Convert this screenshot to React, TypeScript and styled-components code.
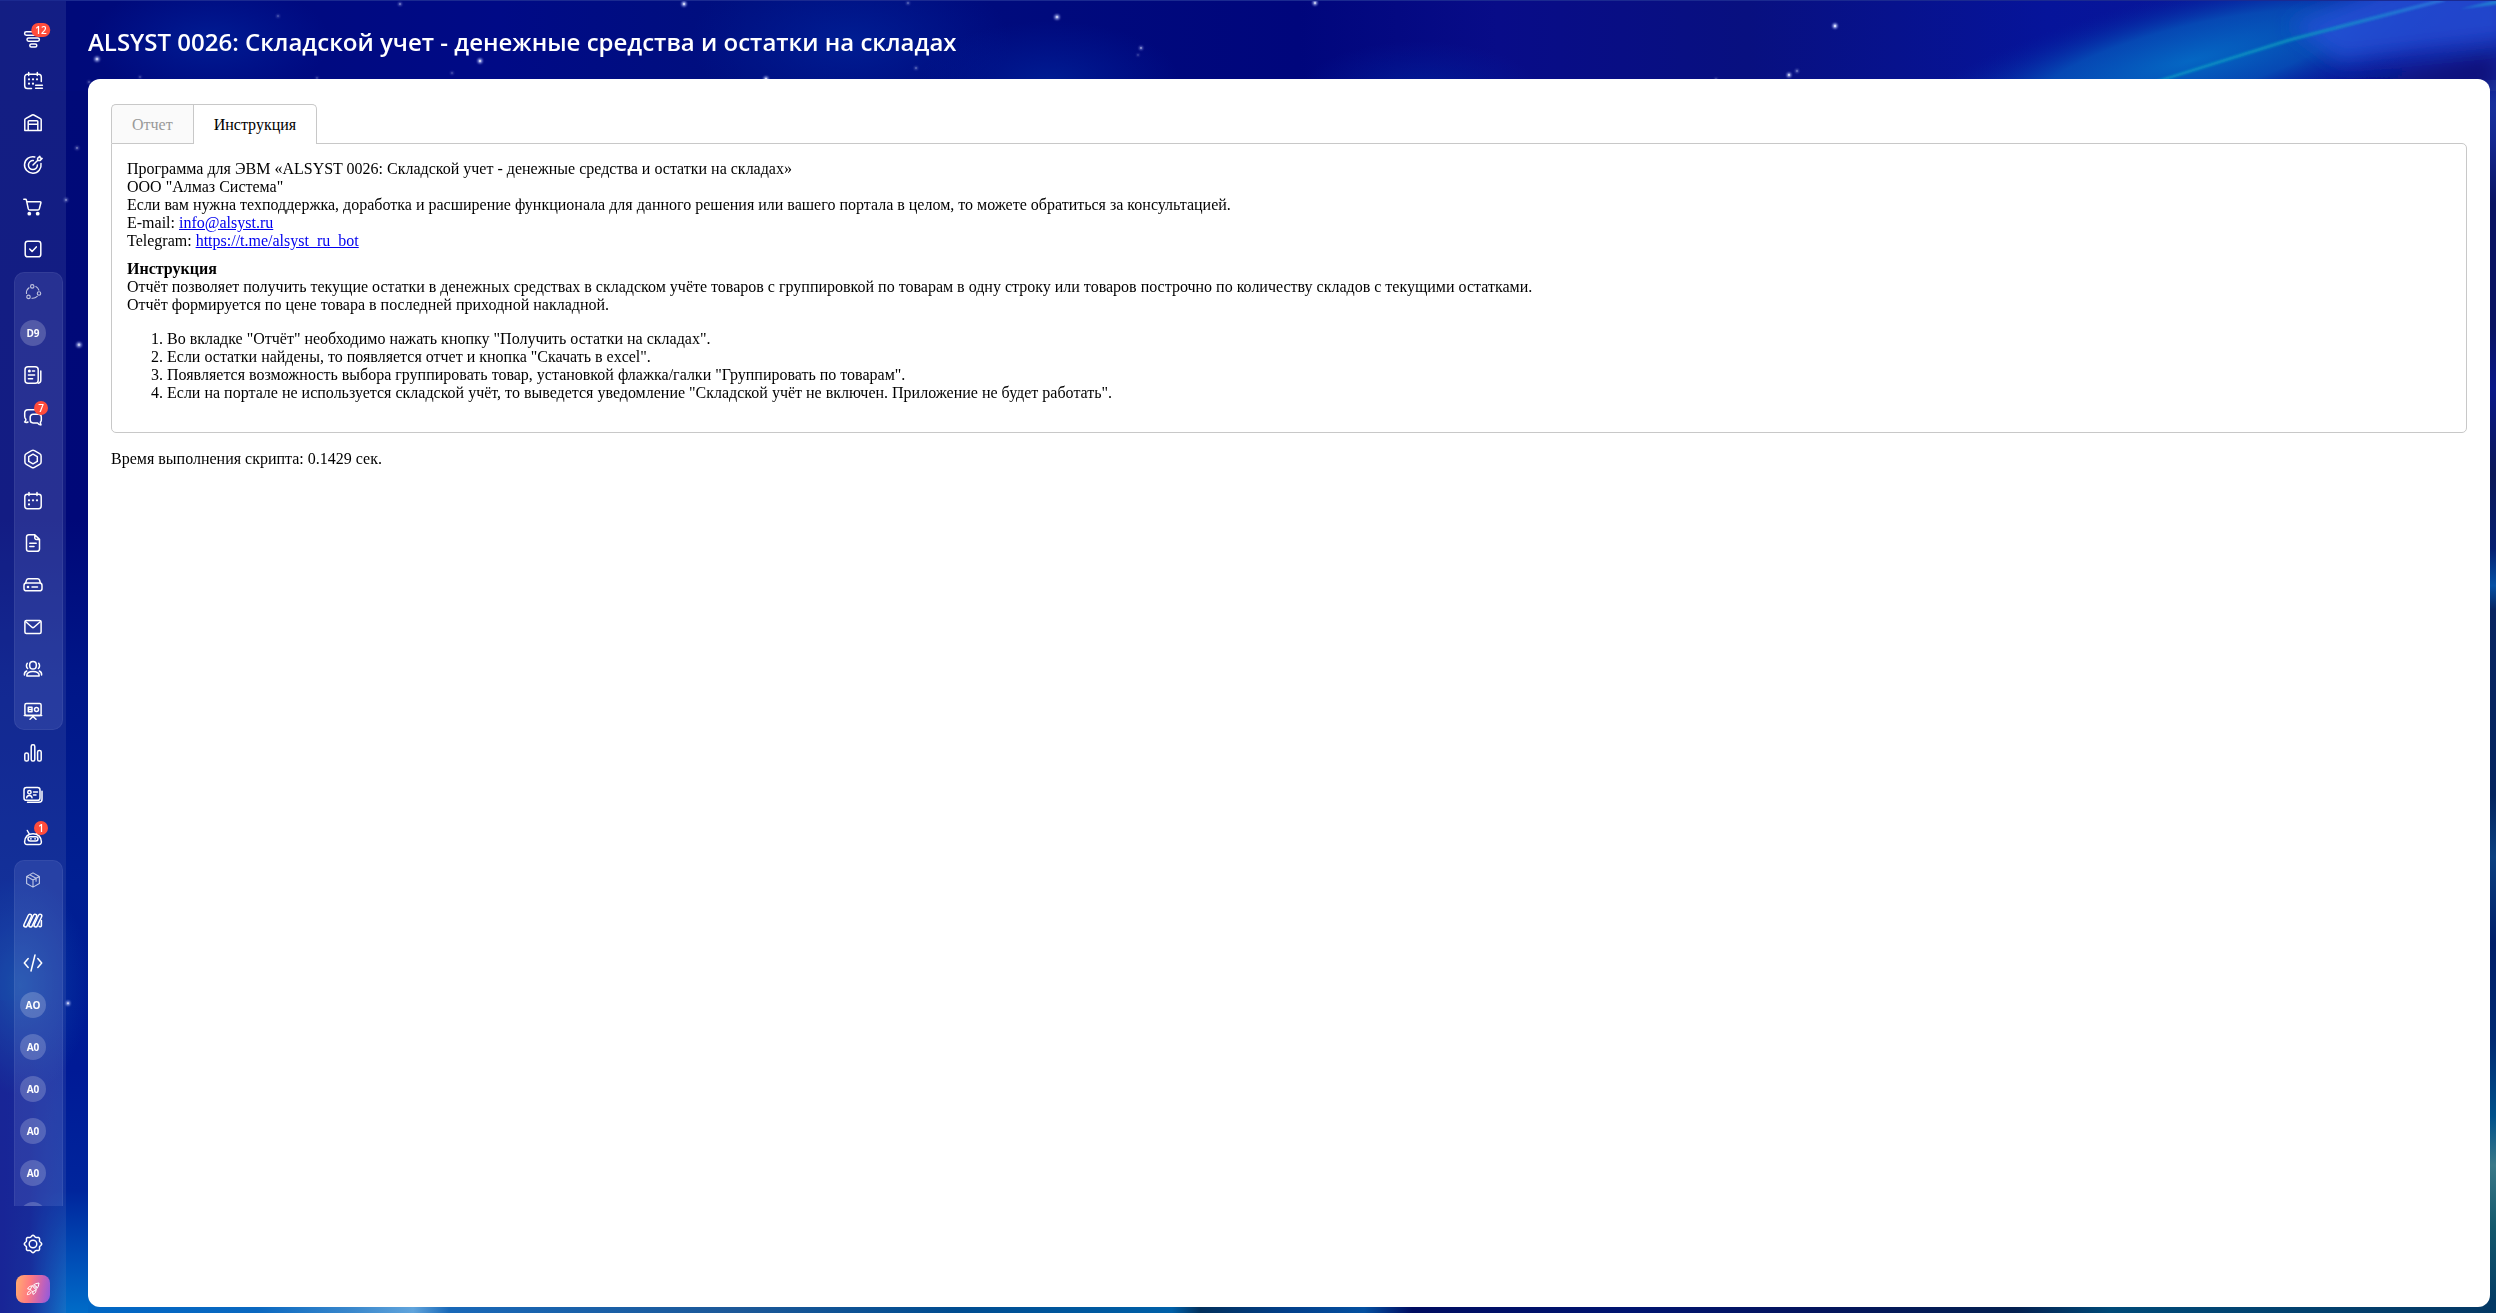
import React from "react";
import styled, { createGlobalStyle } from "styled-components";

const GlobalStyle = createGlobalStyle`
  *, *::before, *::after { box-sizing: border-box; }
  html, body { margin: 0; padding: 0; background: #000a80; }
  body { font-family: "Liberation Serif", "Times New Roman", serif; font-size: 16px; line-height: 18px; color: #000; }
`;

const Shell = styled.div`
  position: relative;
  isolation: isolate;
  display: flex;
  height: 100vh;
  overflow: hidden;
  border-top: 1px solid #1b2a90;
`;

const Backdrop = styled.svg`
  position: absolute;
  inset: 0;
  z-index: -1;
  width: 100%;
  height: 100%;
`;

const Sidebar = styled.nav`
  flex: none;
  display: flex;
  flex-direction: column;
  width: 66px;
  background: rgba(120, 135, 190, 0.16);
`;

const MenuScroll = styled.div`
  flex: 1;
  min-height: 0;
  overflow: hidden;
  padding-top: 17px;
`;

const MenuFooter = styled.div`
  flex: none;
  display: flex;
  flex-direction: column;
  align-items: center;
  gap: 18px;
  height: 107px;
  padding-top: 25px;
`;

const List = styled.ul`
  list-style: none;
  margin: 0;
  padding: 0;
`;

const Group = styled.div`
  display: flow-root;
  margin: 2px 3px 2px 14px;
  border-radius: 10px;
  background: rgba(190, 200, 255, 0.12);
  box-shadow: inset 0 0 0 1px rgba(255, 255, 255, 0.06);

  ul { margin: -2px 8px -2px -14px; padding: 2px 0; }
  li:first-child { height: 40px; }
  li:last-child { height: 40px; padding-top: 2px; }
`;

const Item = styled.li`
  display: flex;
  width: 66px;
  height: 42px;
  align-items: center;
  justify-content: center;
`;

const MenuButton = styled.button<{ $dim?: boolean }>`
  position: relative;
  display: flex;
  align-items: center;
  justify-content: center;
  width: 26px;
  height: 26px;
  padding: 0;
  border: 0;
  background: none;
  color: #fff;
  opacity: ${(p) => (p.$dim ? 0.7 : 1)};
  cursor: pointer;
`;

const Avatar = styled.span`
  width: 26px;
  height: 26px;
  border-radius: 50%;
  background: rgba(255, 255, 255, 0.2);
  font: 700 10px/26px "Open Sans", sans-serif;
  text-align: center;
`;

const Badge = styled.span`
  position: absolute;
  top: -3px;
  left: 21px;
  min-width: 14px;
  height: 14px;
  padding: 0 4px;
  border-radius: 7px;
  transform: translateX(-50%);
  background: #ff4c3b;
  font: 600 10px/14px "Open Sans", sans-serif;
`;

const Glyph = styled.svg<{ $size?: number }>`
  display: block;
  flex: none;
  width: ${(p) => p.$size ?? 24}px;
  height: ${(p) => p.$size ?? 24}px;
  fill: none;
  stroke: currentColor;
  stroke-width: 1.5;
  stroke-linecap: round;
  stroke-linejoin: round;
`;

const RocketButton = styled.button`
  display: flex;
  align-items: center;
  justify-content: center;
  width: 34px;
  height: 28px;
  padding: 0;
  border: 0;
  border-radius: 8px;
  background: linear-gradient(100deg, #ffb070 0%, #ff7a80 40%, #c462b8 72%, #8b5be0 100%);
  color: #fff;
  cursor: pointer;
`;

const Main = styled.main`
  flex: 1;
  min-width: 0;
  display: flex;
  flex-direction: column;
  padding: 0 6px 6px 22px;
`;

const Title = styled.h1`
  flex: none;
  margin: 0;
  height: 78px;
  font: 600 24px/82px "Open Sans", sans-serif;
  color: #fff;
  white-space: nowrap;
`;

const Page = styled.section`
  flex: 1;
  padding: 25px 23px;
  border-radius: 12px;
  background: #fff;
`;

const Tabs = styled.div`
  display: flex;
`;

const Tab = styled.button<{ $active?: boolean }>`
  height: ${(p) => (p.$active ? 40 : 39)}px;
  margin-bottom: ${(p) => (p.$active ? -1 : 0)}px;
  padding: 0 20px;
  border: 1px solid #c8c8c8;
  border-bottom: 0;
  border-right-width: ${(p) => (p.$active ? 1 : 0)}px;
  border-radius: ${(p) => (p.$active ? "0 5px 0 0" : "5px 0 0 0")};
  position: relative;
  background: ${(p) => (p.$active ? "#fff" : "#fafafa")};
  color: ${(p) => (p.$active ? "#000" : "#999")};
  font: inherit;
  line-height: 40px;
  cursor: pointer;
`;

const TabPanel = styled.div`
  padding: 16px 15px 30px;
  border: 1px solid #c8c8c8;
  border-radius: 0 5px 5px 5px;
`;

const Paragraph = styled.p`
  margin: 0 0 10px;
`;

const Steps = styled.ol`
  margin: 16px 0 0;
  padding-left: 40px;
`;

const Link = styled.a`
  color: #0000ee;
`;

const Timing = styled.p`
  margin: 17px 0 0;
`;

const dot = (x: number, y: number, r = 1.1) => (
  <circle key={`${x}-${y}`} cx={x} cy={y} r={r} fill="currentColor" stroke="none" />
);

const gearOutline =
  Array.from({ length: 96 }, (_, i) => {
    const a = (i / 96) * Math.PI * 2;
    const r = 7.9 + 0.75 * Math.cos(a * 8);
    return `${i ? "L" : "M"}${(12 + r * Math.cos(a)).toFixed(2)} ${(12 + r * Math.sin(a)).toFixed(2)}`;
  }).join("") + "z";

const icons: Record<string, React.ReactNode> = {
  funnel: (
    <>
      <rect x="3.6" y="4.8" width="16.8" height="3.4" rx="1.7" />
      <rect x="6" y="11" width="12.4" height="3.2" rx="1.6" />
      <rect x="8.8" y="17.1" width="7" height="3" rx="1.5" />
    </>
  ),
  planner: (
    <>
      <path d="M10.5 19.5H6.5a2.8 2.8 0 0 1-2.8-2.8V8a2.8 2.8 0 0 1 2.8-2.8h11A2.8 2.8 0 0 1 20.3 8v4.5" />
      <path d="M7.7 3.6v3M16.3 3.6v3M14.6 16.2h6.8M14.6 19.3h6.8" />
      {[dot(12, 10.3), dot(16, 10.3), dot(8, 10.3), dot(8, 14.7), dot(12, 14.7)]}
    </>
  ),
  warehouse: (
    <>
      <path d="M3.8 19.4V8.8c0-.6.3-1 .8-1.2L11.2 4a1.7 1.7 0 0 1 1.6 0l6.6 3.6c.5.2.8.6.8 1.2v10.6z" />
      <path d="M7.2 19.2V10.6c0-.5.3-.8.8-.8h8c.5 0 .8.3.8.8v8.6M7.4 13.3h9.2" />
    </>
  ),
  target: (
    <>
      <path d="M13.8 3.9A8.3 8.3 0 1 0 20 10.6" />
      <path d="M12.3 7.6a4.5 4.5 0 1 0 4.1 4.3M12 12l4.8-4.8M16.6 7.3V5.4l2.2-2.1.5 1.7 1.8.5-2.2 2.1z" />
    </>
  ),
  cart: (
    <>
      <path d="M2.8 4.3h1.6c.5 0 .9.3 1 .8l1.9 8.8c.2.7.7 1.1 1.4 1.1h8.2c.7 0 1.2-.4 1.4-1.1l1.6-6.1c.1-.6-.2-1-.8-1H6.2" />
      {[dot(8.3, 18.7, 1.9), dot(16.7, 18.7, 1.9)]}
    </>
  ),
  tasks: (
    <>
      <rect x="4.2" y="4.2" width="15.6" height="15.6" rx="2.6" />
      <path d="M8.7 12l2.4 2.4 4.2-4.5" />
    </>
  ),
  cycle: (
    <>
      <circle cx="11" cy="4.5" r="2.3" />
      <circle cx="20" cy="14" r="2.3" />
      <circle cx="6" cy="18.5" r="2.3" />
      <path d="M6.7 6.3A8.5 8.5 0 0 0 3.3 14M15.8 4.7A8.5 8.5 0 0 1 19.8 9.5M10.6 20.3a8.5 8.5 0 0 0 7-2.4" />
    </>
  ),
  feed: (
    <>
      <rect x="4" y="3.7" width="13.2" height="16.6" rx="3" />
      <path d="M19.8 8v9.2a3 3 0 0 1-2.6 3M7.4 12h6.2M7.4 15.7h4.2M11.4 8h2.2" />
      {dot(8.4, 8, 1.5)}
    </>
  ),
  chats: (
    <>
      <path d="M7 17c-1.2.6-2.6.6-3.4 0 1-.8 1.4-1.7 1.3-2.7A3.5 3.5 0 0 1 3.7 11.6V8A3.3 3.3 0 0 1 7 4.7h7.5A3.3 3.3 0 0 1 17.6 7" />
      <path d="M12 9.3h5.5a2.8 2.8 0 0 1 2.8 2.8v3c0 1-.4 1.7-.9 2.1 0 1.1.2 1.9.6 2.7-1.5 0-2.8-.8-3.5-2H12a2.8 2.8 0 0 1-2.8-2.8v-3A2.8 2.8 0 0 1 12 9.3z" />
    </>
  ),
  hexagon: (
    <>
      <path d="M10.6 3.7a2.8 2.8 0 0 1 2.8 0l5.2 2.9a2.8 2.8 0 0 1 1.5 2.5v5.8a2.8 2.8 0 0 1-1.5 2.5l-5.2 2.9a2.8 2.8 0 0 1-2.8 0l-5.2-2.9a2.8 2.8 0 0 1-1.5-2.5V9.1a2.8 2.8 0 0 1 1.5-2.5z" />
      <path d="M12 7.2l4.3 2.4v4.8L12 16.8l-4.3-2.4V9.6z" />
    </>
  ),
  calendar: (
    <>
      <rect x="3.8" y="5.2" width="16.4" height="14.5" rx="2.6" />
      <path d="M8 3.6v3M16 3.6v3" />
      {[dot(8, 11.3), dot(12, 11.3), dot(16, 11.3), dot(8, 15.4)]}
    </>
  ),
  doc: (
    <path d="M13.8 3.7H7.8A2.3 2.3 0 0 0 5.5 6v12a2.3 2.3 0 0 0 2.3 2.3h8.4a2.3 2.3 0 0 0 2.3-2.3V8.4zM13.8 3.9v3a1.5 1.5 0 0 0 1.5 1.5h3M8.8 12.3h6.4M8.8 15.5h4.2" />
  ),
  disk: (
    <>
      <path d="M4.5 10.3l1-3.2c.3-.9 1-1.4 1.9-1.4h9.2c.9 0 1.6.5 1.9 1.4l1 3.2" />
      <rect x="3" y="10" width="18" height="7.8" rx="2.4" />
      <path d="M11 14h5.5" />
      {dot(7, 14, 1.3)}
    </>
  ),
  mail: (
    <>
      <rect x="3.9" y="5.6" width="16.2" height="12.8" rx="1.5" />
      <path d="M4.5 6.5l6.5 5.7a1.5 1.5 0 0 0 2 0l6.5-5.7" />
    </>
  ),
  people: (
    <>
      <rect x="8.7" y="4.4" width="6.6" height="7.6" rx="3.3" />
      <path d="M5.8 19c-.4-3 2.3-4.6 6.2-4.6s6.6 1.6 6.2 4.6zM6.3 6.3c-1.2 1.3-1.2 3.9.3 5.2M17.7 6.3c1.2 1.3 1.2 3.9-.3 5.2M5.7 14c-1.7.7-2.5 2-2.3 4M18.3 14c1.7.7 2.5 2 2.3 4" />
    </>
  ),
  board: (
    <>
      <rect x="3.9" y="4.4" width="16.2" height="12" rx="1.5" />
      <path d="M3.3 16.4h17.4M12 16.5v1l-3 2.8M12 17.5l3 2.8M7.3 8.2h3.7v4.6H7.3zM7.3 10.5h3.5" />
      <circle cx="15.5" cy="10.5" r="2" />
    </>
  ),
  bars: (
    <>
      <rect x="3.8" y="12" width="3.6" height="8" rx="1.6" />
      <rect x="10.2" y="3.8" width="3.6" height="16.2" rx="1.6" />
      <rect x="16.6" y="9.5" width="3.6" height="10.5" rx="1.6" />
    </>
  ),
  card: (
    <>
      <rect x="3" y="4.5" width="16" height="12.8" rx="2.4" />
      <path d="M21 8.2v8a3 3 0 0 1-3 3H6.5M12.5 9h4M12.5 12h2.5M5.7 14.8c.2-3.2 5-3.2 5.3 0" />
      <circle cx="8.4" cy="9.3" r="1.7" />
    </>
  ),
  robot: (
    <>
      <path d="M6 19.5h12a2.4 2.4 0 0 0 2.4-2.6C20 11.5 17 8.7 12 8.7S4 11.5 3.6 16.9A2.4 2.4 0 0 0 6 19.5zM8.3 9L6.3 5.5M15.7 9l1.5-2.5" />
      <rect x="7" y="11.7" width="10" height="4.2" rx="2.1" />
      {[dot(9.9, 13.8, 0.9), dot(14.1, 13.8, 0.9)]}
    </>
  ),
  box: (
    <path d="M12 2.5l8.5 4.7v9.6L12 21.5l-8.5-4.7V7.2zM3.7 7.3L12 12l8.3-4.7M12 12v9.3M7.5 5l8.6 4.8v3.8" />
  ),
  automation: (
    <>
      <rect x="5" y="4.8" width="3.4" height="13.6" rx="1.7" transform="rotate(25 6.7 11.6)" />
      <rect x="10.1" y="4.8" width="3.4" height="13.6" rx="1.7" transform="rotate(25 11.8 11.6)" />
      <rect x="15.2" y="4.8" width="3.4" height="13.6" rx="1.7" transform="rotate(25 16.9 11.600)" />
      <path d="M20.400 11.500v5.200a1.300 1.300 0 0 1-2.400.5" />
    </>
  ),
  code: <path d="M7.2 7.5L3.3 12l3.9 4.5M16.8 7.5l3.9 4.5-3.9 4.5M14 4l-4 16" />,
  gear: (
    <>
      <path d={gearOutline} />
      <circle cx="12" cy="12" r="3.8" />
    </>
  ),
  rocket: (
    <>
      <path d="M8 12.5c2-5.5 6-9 13-9.5-.5 7-4 11-9.5 13zM8 12.5l-4-.5c1-3.2 3.5-5 7-4.5M11.5 16l.5 4c3.2-1 5-3.5 4.5-7M7 15c-2 .5-3.5 2.5-3.5 5.5 3 0 5-1.5 5.5-3.5" />
      <circle cx="15" cy="9" r="2" />
    </>
  ),
};

type Entry = { icon?: string; text?: string; label: string; badge?: string; dim?: boolean };

const topItems: Entry[] = [
  { icon: "funnel", label: "CRM", badge: "12" },
  { icon: "planner", label: "Бронирование" },
  { icon: "warehouse", label: "Склад" },
  { icon: "target", label: "Маркетинг" },
  { icon: "cart", label: "Магазины" },
  { icon: "tasks", label: "Задачи" },
];

const teamItems: Entry[] = [
  { icon: "cycle", label: "Совместная работа", dim: true },
  { text: "D9", label: "D9" },
  { icon: "feed", label: "Лента" },
  { icon: "chats", label: "Мессенджер", badge: "7" },
  { icon: "hexagon", label: "Коллабы" },
  { icon: "calendar", label: "Календарь" },
  { icon: "doc", label: "Документы" },
  { icon: "disk", label: "Диск" },
  { icon: "mail", label: "Почта" },
  { icon: "people", label: "Группы" },
  { icon: "board", label: "Доски" },
];

const middleItems: Entry[] = [
  { icon: "bars", label: "Аналитика" },
  { icon: "card", label: "Сотрудники" },
  { icon: "robot", label: "Роботы", badge: "1" },
];

const appItems: Entry[] = [
  { icon: "box", label: "Приложения", dim: true },
  { icon: "automation", label: "Автоматизация" },
  { icon: "code", label: "Разработчикам" },
  { text: "AO", label: "AO" },
  { text: "A0", label: "A0 1" },
  { text: "A0", label: "A0 2" },
  { text: "A0", label: "A0 3" },
  { text: "A0", label: "A0 4" },
  { label: "Ещё" },
];

const Icon = ({ name, size }: { name: string; size?: number }) => (
  <Glyph viewBox="0 0 24 24" $size={size} aria-hidden="true">
    {icons[name]}
  </Glyph>
);

const Menu = ({ items }: { items: Entry[] }) => (
  <List>
    {items.map((e) => (
      <Item key={e.label}>
        <MenuButton type="button" aria-label={e.label} $dim={e.dim}>
          {e.icon ? <Icon name={e.icon} size={e.dim ? 18 : 24} /> : <Avatar>{e.text}</Avatar>}
          {e.badge && <Badge>{e.badge}</Badge>}
        </MenuButton>
      </Item>
    ))}
  </List>
);

const stars = [
  [97, 58, 2.6, 0.8], [89, 81, 1.6, 0.4], [77, 147, 1.8, 0.5], [66, 199, 1.8, 0.6], [79, 344, 2.6, 0.8],
  [68, 1003, 2.2, 0.9], [400, 3, 1.6, 0.7], [278, 15, 1.6, 0.4], [684, 3, 2.4, 0.9], [480, 60, 2.4, 0.9],
  [452, 72, 1.5, 0.4], [766, 78, 2.4, 0.9], [916, 67, 1.6, 0.5], [908, 2, 1.6, 0.5], [1057, 16, 2.6, 0.8],
  [1141, 47, 1.8, 0.7], [1138, 54, 1.2, 0.4], [1315, 2, 2.4, 0.8], [1835, 25, 2.4, 1], [1789, 74, 2.2, 0.9],
  [1797, 70, 1.6, 0.6], [140, 76, 1.3, 0.4], [317, 77, 1.3, 0.4], [355, 44, 1.8, 0.5], [1716, 78, 1.3, 0.4],
];

const Sky = () => (
  <Backdrop viewBox="0 0 2496 1313" preserveAspectRatio="none" aria-hidden="true">
    <defs>
      <linearGradient id="top" x1="0" x2="1" y1="0" y2="0">
        <stop offset="0" stopColor="#000a78" />
        <stop offset="0.2" stopColor="#000a86" />
        <stop offset="0.3" stopColor="#000f7e" />
        <stop offset="0.52" stopColor="#00067c" />
        <stop offset="0.6" stopColor="#080c88" />
        <stop offset="0.7" stopColor="#081080" />
        <stop offset="0.82" stopColor="#06149a" />
        <stop offset="1" stopColor="#0c1c98" />
      </linearGradient>
      <linearGradient id="left" x1="0" x2="0" y1="0" y2="1">
        <stop offset="0" stopColor="#000a78" />
        <stop offset="0.35" stopColor="#000878" />
        <stop offset="0.48" stopColor="#001688" />
        <stop offset="0.65" stopColor="#001f92" />
        <stop offset="0.8" stopColor="#001a96" />
        <stop offset="0.9" stopColor="#00259c" />
        <stop offset="0.96" stopColor="#0050b8" />
        <stop offset="1" stopColor="#006cc8" />
      </linearGradient>
      <linearGradient id="edge" x1="0" x2="1" y1="0" y2="0">
        <stop offset="0" stopColor="#06128e" />
        <stop offset="0.45" stopColor="#061690" stopOpacity="0.9" />
        <stop offset="1" stopColor="#06209a" stopOpacity="0" />
      </linearGradient>
      <linearGradient id="right" x1="0" x2="0" y1="0" y2="1">
        <stop offset="0" stopColor="#1a38a8" />
        <stop offset="0.05" stopColor="#142890" />
        <stop offset="0.1" stopColor="#0a1462" />
        <stop offset="0.2" stopColor="#0a1462" />
        <stop offset="0.25" stopColor="#0a1888" />
        <stop offset="0.32" stopColor="#0c1858" />
        <stop offset="0.38" stopColor="#051f70" />
        <stop offset="0.41" stopColor="#0650a4" />
        <stop offset="0.43" stopColor="#082460" />
        <stop offset="0.58" stopColor="#04245e" />
        <stop offset="0.63" stopColor="#0c4080" />
        <stop offset="0.7" stopColor="#001e68" />
        <stop offset="0.78" stopColor="#002a72" />
        <stop offset="0.84" stopColor="#00508a" />
        <stop offset="0.88" stopColor="#3a7888" />
        <stop offset="0.93" stopColor="#14586c" />
        <stop offset="1" stopColor="#043864" />
      </linearGradient>
      <linearGradient id="bottom" x1="0" x2="1" y1="0" y2="0">
        <stop offset="0" stopColor="#0066c4" />
        <stop offset="0.07" stopColor="#0a68c0" />
        <stop offset="0.11" stopColor="#3a88cc" />
        <stop offset="0.135" stopColor="#60a4dc" />
        <stop offset="0.15" stopColor="#1868b8" />
        <stop offset="0.27" stopColor="#1c5898" />
        <stop offset="0.36" stopColor="#004c90" />
        <stop offset="0.45" stopColor="#0060a8" />
        <stop offset="0.462" stopColor="#02305c" />
        <stop offset="0.5" stopColor="#02408c" />
        <stop offset="0.53" stopColor="#0450a0" />
        <stop offset="0.55" stopColor="#000c60" />
        <stop offset="0.64" stopColor="#001470" />
        <stop offset="0.72" stopColor="#04145c" />
        <stop offset="0.8" stopColor="#042050" />
        <stop offset="0.84" stopColor="#004a78" />
        <stop offset="1" stopColor="#043864" />
      </linearGradient>
      <radialGradient id="glow">
        <stop offset="0" stopColor="#0470c8" />
        <stop offset="0.5" stopColor="#0560c0" stopOpacity="0.75" />
        <stop offset="1" stopColor="#0520a0" stopOpacity="0" />
      </radialGradient>
      <radialGradient id="haze">
        <stop offset="0" stopColor="#0028a0" stopOpacity="0.6" />
        <stop offset="1" stopColor="#0020a0" stopOpacity="0" />
      </radialGradient>
      <radialGradient id="shine">
        <stop offset="0" stopColor="#0a48a8" stopOpacity="0.9" />
        <stop offset="1" stopColor="#0a40a8" stopOpacity="0" />
      </radialGradient>
      <linearGradient id="ray" x1="0" x2="1" y1="0" y2="0">
        <stop offset="0" stopColor="#08a0c8" />
        <stop offset="0.5" stopColor="#0898c0" />
        <stop offset="1" stopColor="#3078e0" />
      </linearGradient>
      <filter id="soft" x="-10%" y="-50%" width="120%" height="200%">
        <feGaussianBlur stdDeviation="1.2" />
      </filter>
      <filter id="wide" x="-30%" y="-60%" width="160%" height="220%">
        <feGaussianBlur stdDeviation="10" />
      </filter>
    </defs>
    <rect width="2496" height="1313" fill="url(#top)" />
    <rect y="90" width="120" height="1223" fill="url(#left)" />
    <rect y="1000" width="66" height="313" fill="url(#edge)" />
    <ellipse cx="20" cy="985" rx="70" ry="110" fill="url(#shine)" />
    <rect x="2460" y="79" width="36" height="1234" fill="url(#right)" />
    <rect y="1300" x="88" width="2408" height="13" fill="url(#bottom)" />
    <ellipse cx="210" cy="40" rx="120" ry="60" fill="url(#haze)" />
    <ellipse cx="850" cy="40" rx="160" ry="80" fill="url(#haze)" />
    <ellipse cx="1050" cy="80" rx="130" ry="60" fill="url(#haze)" />
    <ellipse cx="1420" cy="90" rx="120" ry="50" fill="url(#haze)" />
    <ellipse cx="2190" cy="60" rx="310" ry="70" transform="rotate(-14 2190 60)" fill="url(#glow)" opacity="0.9" />
    <g filter="url(#wide)">
      <path d="M2290 24L2400 -20H2510V40L2340 60z" fill="#2450d8" opacity="0.8" />
      <path d="M2330 90L2496 52V90z" fill="#100c78" opacity="0.9" />
    </g>
    <path d="M2148 82L2290 37L2440 -2L2446 0L2292 40L2156 82z" fill="url(#ray)" opacity="0.8" filter="url(#soft)" />
    <path d="M2460 8L2500 -2V3z" fill="#20a0d8" opacity="0.6" filter="url(#soft)" />
    <g fill="#b8c4ff" filter="url(#soft)">
      {stars.map(([x, y, r, o]) => (
        <circle key={`${x}-${y}`} cx={x} cy={y} r={r} opacity={o} />
      ))}
    </g>
    <g fill="#fff">
      {stars.map(([x, y, r, o]) => (
        <circle key={`${x}-${y}`} cx={x} cy={y} r={r / 2} opacity={o * 0.6} />
      ))}
    </g>
  </Backdrop>
);

export default function App() {
  return (
    <>
      <GlobalStyle />
      <Shell>
        <Sky />
        <Sidebar aria-label="Меню">
          <MenuScroll>
            <Menu items={topItems} />
            <Group>
              <Menu items={teamItems} />
            </Group>
            <Menu items={middleItems} />
            <Group>
              <Menu items={appItems} />
            </Group>
          </MenuScroll>
          <MenuFooter>
            <MenuButton type="button" aria-label="Настройки">
              <Icon name="gear" />
            </MenuButton>
            <RocketButton type="button" aria-label="Обновить тариф">
              <Icon name="rocket" size={16} />
            </RocketButton>
          </MenuFooter>
        </Sidebar>
        <Main>
          <Title>ALSYST 0026: Складской учет - денежные средства и остатки на складах</Title>
          <Page>
            <Tabs role="tablist">
              <Tab type="button" role="tab" aria-selected="false">
                Отчет
              </Tab>
              <Tab type="button" role="tab" aria-selected="true" $active>
                Инструкция
              </Tab>
            </Tabs>
            <TabPanel role="tabpanel">
              <Paragraph>
                Программа для ЭВМ «ALSYST 0026: Складской учет - денежные средства и остатки на складах»
                <br />
                ООО "Алмаз Система"
                <br />
                Если вам нужна техподдержка, доработка и расширение функционала для данного решения или вашего
                портала в целом, то можете обратиться за консультацией.
                <br />
                E-mail: <Link href="mailto:info@alsyst.ru">info@alsyst.ru</Link>
                <br />
                Telegram: <Link href="https://t.me/alsyst_ru_bot">https://t.me/alsyst_ru_bot</Link>
              </Paragraph>
              <Paragraph>
                <b>Инструкция</b>
                <br />
                Отчёт позволяет получить текущие остатки в денежных средствах в складском учёте товаров с
                группировкой по товарам в одну строку или товаров построчно по количеству складов с текущими
                остатками.
                <br />
                Отчёт формируется по цене товара в последней приходной накладной.
              </Paragraph>
              <Steps>
                <li>Во вкладке "Отчёт" необходимо нажать кнопку "Получить остатки на складах".</li>
                <li>Если остатки найдены, то появляется отчет и кнопка "Скачать в excel".</li>
                <li>
                  Появляется возможность выбора группировать товар, установкой флажка/галки "Группировать по
                  товарам".
                </li>
                <li>
                  Если на портале не используется складской учёт, то выведется уведомление "Складской учёт не
                  включен. Приложение не будет работать".
                </li>
              </Steps>
            </TabPanel>
            <Timing>Время выполнения скрипта: 0.1429 сек.</Timing>
          </Page>
        </Main>
      </Shell>
    </>
  );
}
